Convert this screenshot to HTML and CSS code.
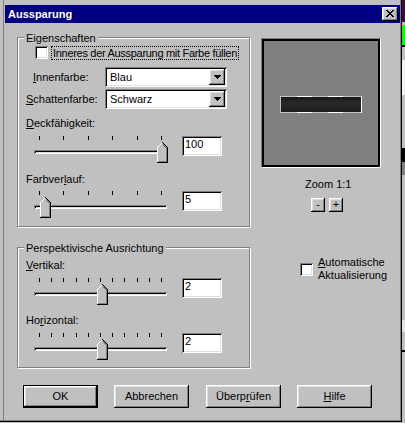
FILE: index.html
```html
<!DOCTYPE html>
<html lang="de">
<head>
  <meta charset="UTF-8">
  <title>Aussparung</title>
  <link rel="stylesheet" href="styles.css">
</head>
<body>
  <div class="screen">
    <div class="dialog">
      <div class="titlebar">
        <span class="title">Aussparung</span>
        <div class="close raised">
          <svg width="8" height="7" viewBox="0 0 8 7" shape-rendering="crispEdges"><path d="M0 0h2v1H0zM6 0h2v1H6zM1 1h2v1H1zM5 1h2v1H5zM2 2h4v1H2zM3 3h2v1H3zM2 4h4v1H2zM1 5h2v1H1zM5 5h2v1H5zM0 6h2v1H0zM6 6h2v1H6z" fill="#000"/></svg>
        </div>
      </div>

      <div class="body">
        <div class="left">
          <div class="group g1">
            <div class="legend">Eigenschaften</div>
            <div class="check-row">
              <span class="checkbox sunken"></span>
              <span class="focus">Inneres der Aussparung mit Farbe füllen</span>
            </div>
            <div class="field-row r1">
              <span class="field-label indent"><u>I</u>nnenfarbe:</span>
              <div class="combo sunken">
                <span class="combo-text">Blau</span>
                <span class="combo-btn raised"><svg width="7" height="4" viewBox="0 0 7 4" shape-rendering="crispEdges"><path d="M0 0h7v1H0zM1 1h5v1H1zM2 2h3v1H2zM3 3h1v1H3z" fill="#000"/></svg></span>
              </div>
            </div>
            <div class="field-row r2">
              <span class="field-label"><u>S</u>chattenfarbe:</span>
              <div class="combo sunken">
                <span class="combo-text">Schwarz</span>
                <span class="combo-btn raised"><svg width="7" height="4" viewBox="0 0 7 4" shape-rendering="crispEdges"><path d="M0 0h7v1H0zM1 1h5v1H1zM2 2h3v1H2zM3 3h1v1H3z" fill="#000"/></svg></span>
              </div>
            </div>

            <div class="slabel s1"><u>D</u>eckfähigkeit:</div>
            <div class="srow s1-row">
              <div class="slider">
                <div class="ticks"><i></i><i></i><i></i><i></i><i></i><i></i></div>
                <div class="track"></div>
                <svg class="thumb" style="left: 123px" width="11" height="21" viewBox="0 0 11 21" shape-rendering="crispEdges">
                  <polygon points="0,5 5,0 6,0 11,5 11,21 0,21" fill="#c0c0c0"/>
                  <path d="M0.5 20V5.5L5.5 0.5" stroke="#fff" fill="none"/>
                  <path d="M5.5 0.5L10.5 5.5V20.5H0" stroke="#000" fill="none"/>
                  <path d="M6 2.5L9.5 6V19.5H1" stroke="#808080" fill="none"/>
                </svg>
              </div>
              <div class="edit sunken">100</div>
            </div>

            <div class="slabel s2">Farbver<u>l</u>auf:</div>
            <div class="srow s2-row">
              <div class="slider">
                <div class="ticks"><i></i><i></i><i></i><i></i><i></i><i></i></div>
                <div class="track"></div>
                <svg class="thumb" style="left: 6px" width="11" height="21" viewBox="0 0 11 21" shape-rendering="crispEdges">
                  <polygon points="0,5 5,0 6,0 11,5 11,21 0,21" fill="#c0c0c0"/>
                  <path d="M0.5 20V5.5L5.5 0.5" stroke="#fff" fill="none"/>
                  <path d="M5.5 0.5L10.5 5.5V20.5H0" stroke="#000" fill="none"/>
                  <path d="M6 2.5L9.5 6V19.5H1" stroke="#808080" fill="none"/>
                </svg>
              </div>
              <div class="edit sunken">5</div>
            </div>
          </div>

          <div class="group g2">
            <div class="legend">Perspektivische Ausrichtung</div>

            <div class="slabel v1"><u>V</u>ertikal:</div>
            <div class="srow v1-row">
              <div class="slider">
                <div class="ticks"><i></i><i></i><i></i><i></i><i></i><i></i><i></i><i></i><i></i><i></i><i></i></div>
                <div class="track"></div>
                <svg class="thumb" style="left: 63px" width="11" height="21" viewBox="0 0 11 21" shape-rendering="crispEdges">
                  <polygon points="0,5 5,0 6,0 11,5 11,21 0,21" fill="#c0c0c0"/>
                  <path d="M0.5 20V5.5L5.5 0.5" stroke="#fff" fill="none"/>
                  <path d="M5.5 0.5L10.5 5.5V20.5H0" stroke="#000" fill="none"/>
                  <path d="M6 2.5L9.5 6V19.5H1" stroke="#808080" fill="none"/>
                </svg>
              </div>
              <div class="edit sunken">2</div>
            </div>

            <div class="slabel v2">Ho<u>r</u>izontal:</div>
            <div class="srow v2-row">
              <div class="slider">
                <div class="ticks"><i></i><i></i><i></i><i></i><i></i><i></i><i></i><i></i><i></i><i></i><i></i></div>
                <div class="track"></div>
                <svg class="thumb" style="left: 63px" width="11" height="21" viewBox="0 0 11 21" shape-rendering="crispEdges">
                  <polygon points="0,5 5,0 6,0 11,5 11,21 0,21" fill="#c0c0c0"/>
                  <path d="M0.5 20V5.5L5.5 0.5" stroke="#fff" fill="none"/>
                  <path d="M5.5 0.5L10.5 5.5V20.5H0" stroke="#000" fill="none"/>
                  <path d="M6 2.5L9.5 6V19.5H1" stroke="#808080" fill="none"/>
                </svg>
              </div>
              <div class="edit sunken">2</div>
            </div>
          </div>
        </div>

        <div class="right">
          <div class="preview">
            <div class="bar"></div>
          </div>
          <div class="zoom-label">Zoom 1:1</div>
          <div class="zoom-buttons">
            <div class="small-btn raised">-</div>
            <div class="small-btn raised">+</div>
          </div>
          <div class="auto">
            <span class="checkbox sunken"></span>
            <span class="auto-label"><u>A</u>utomatische<br>Aktualisierung</span>
          </div>
        </div>
      </div>

      <div class="buttons">
        <div class="btn raised default">OK</div>
        <div class="btn raised">Abbrechen</div>
        <div class="btn raised check-btn">Überp<u>r</u>üfen</div>
        <div class="btn raised"><u>H</u>ilfe</div>
      </div>
    </div>

    <div class="behind">
      <i class="b-purple"></i>
      <i class="b-gray" style="height: 3px"></i>
      <i class="b-green"></i>
      <i class="b-black" style="height: 2px"></i>
      <i class="b-gray" style="height: 13px"></i>
      <i class="b-white"></i>
      <i class="b-gray" style="height: 53px"></i>
      <i class="b-black" style="height: 14px"></i>
      <i class="b-dark"></i>
      <i class="b-gray" style="height: 145px"></i>
      <i class="b-light"></i>
      <i class="b-gray" style="height: 18px"></i>
      <i class="b-black" style="height: 2px"></i>
    </div>
  </div>
</body>
</html>
```

FILE: styles.css
```css
* {
  margin: 0;
  padding: 0;
  box-sizing: border-box;
}

body {
  width: 405px;
  height: 423px;
  overflow: hidden;
  background: #c0c0c0;
  color: #000;
  font-family: "Liberation Sans", Arial, sans-serif;
  font-size: 11px;
  line-height: 13px;
}

u {
  text-underline-offset: 1px;
}

.screen {
  display: flex;
  height: 423px;
}

/* win95 bevels */
.raised {
  background: #c0c0c0;
  box-shadow: inset -1px -1px #000, inset 1px 1px #fff, inset -2px -2px #808080, inset 2px 2px #dfdfdf;
}

.sunken {
  background: #fff;
  box-shadow: inset 1px 1px #808080, inset -1px -1px #fff, inset 2px 2px #000, inset -2px -2px #dfdfdf;
}

.dialog {
  width: 402px;
  height: 422px;
  flex: none;
  box-shadow: inset -1px -1px #000, inset -2px -2px #808080, inset 3px 0 #c0c0c0, inset 4px 0 #808080;
}

.titlebar {
  margin: 5px 0 0 5px;
  width: 395px;
  height: 18px;
  background: #000080;
  color: #fff;
  display: flex;
  align-items: flex-start;
  justify-content: space-between;
  padding: 0 2px 0 3px;
}

.title {
  font-weight: bold;
  line-height: 18px;
}

.close {
  width: 16px;
  height: 14px;
  margin-top: 2px;
}

.close svg {
  display: block;
  margin: 3px 0 0 4px;
}

.body {
  display: flex;
  padding: 14px 0 0 17px;
}

.left {
  width: 233px;
  flex: none;
}

.group {
  border: 1px solid #808080;
  box-shadow: inset 1px 1px #fff, 1px 1px #fff;
}

.g1 {
  height: 190px;
}

.g2 {
  height: 121px;
  margin-top: 20px;
}

.legend {
  width: fit-content;
  margin: -6px 0 0 6px;
  padding: 0 2px;
  background: #c0c0c0;
}

.check-row {
  display: flex;
  align-items: flex-start;
  margin: 1px 0 0 17px;
}

.checkbox {
  width: 13px;
  height: 13px;
  flex: none;
}

.focus {
  margin-left: 3px;
  padding: 0 1px;
  border: 1px dotted #000;
  line-height: 12px;
  white-space: nowrap;
  letter-spacing: -0.3px;
}

.field-row {
  display: flex;
  align-items: center;
  height: 20px;
  margin-left: 8px;
}

.r1 {
  margin-top: 7px;
}

.r2 {
  margin-top: 2px;
}

.field-label {
  width: 79px;
}

.indent {
  padding-left: 7px;
}

.combo {
  width: 122px;
  height: 20px;
  display: flex;
  justify-content: space-between;
  padding: 2px;
}

.combo-text {
  padding-left: 3px;
  line-height: 16px;
}

.combo-btn {
  width: 16px;
  height: 16px;
  display: flex;
  align-items: center;
  justify-content: center;
}

.combo-btn svg {
  display: block;
}

.slabel {
  margin-left: 8px;
}

.s1 {
  margin-top: 8px;
}

.s2 {
  margin-top: 11px;
}

.v1 {
  margin-top: 4px;
}

.v2 {
  margin-top: 10px;
}

.srow {
  display: flex;
  margin: 6px 0 0 16px;
}

.s2-row {
  margin-top: 5px;
}

.slider {
  position: relative;
  width: 133px;
  height: 26px;
}

.ticks {
  display: flex;
  justify-content: space-between;
  height: 4px;
  padding: 0 5px;
}

.ticks i {
  width: 1px;
  background: #000;
}

.track {
  position: absolute;
  left: 0;
  right: 0;
  top: 14px;
  height: 4px;
  background: #c0c0c0;
  box-shadow: inset 1px 1px #808080, inset -1px -1px #fff, inset 2px 2px #000, inset -2px -2px #dfdfdf;
}

.thumb {
  position: absolute;
  top: 6px;
  display: block;
}

.edit {
  width: 40px;
  height: 20px;
  margin-left: 15px;
  padding: 2px 0 0 3px;
  line-height: 12px;
}

.right {
  width: 151px;
  padding: 1px 0 0 11px;
}

.preview {
  width: 120px;
  height: 130px;
  border: 1px solid;
  border-color: #808080 #fff #fff #808080;
  background: #808080;
  box-shadow: inset 0 0 0 2px #000;
  padding: 57px 0 0 18px;
}

.bar {
  width: 82px;
  height: 17px;
  border-left: 1px solid #c0c0c0;
  border-right: 1px solid #fff;
  background:
    linear-gradient(to right, #c4c4c4 0 16px, #fff 16px 31px, #c4c4c4 31px 47px, #fff 47px 62px, #c4c4c4 62px) top / 100% 1px no-repeat,
    linear-gradient(to right, #c4c4c4 0 16px, #fff 16px 31px, #c4c4c4 31px 47px, #fff 47px 62px, #c4c4c4 62px) bottom / 100% 1px no-repeat,
    linear-gradient(#141414, #2a2a2a 40%, #1c1c1c);
}

.zoom-label {
  margin-top: 10px;
  padding-left: 44px;
}

.zoom-buttons {
  display: flex;
  gap: 4px;
  margin: 7px 0 0 50px;
}

.small-btn {
  width: 14px;
  height: 14px;
  text-align: center;
  line-height: 13px;
}

.auto {
  display: flex;
  align-items: center;
  margin: 44px 0 0 39px;
}

.auto-label {
  margin-left: 5px;
}

.buttons {
  display: flex;
  gap: 16px;
  margin: 17px 0 0 23px;
}

.btn {
  width: 75px;
  height: 23px;
  display: flex;
  align-items: center;
  justify-content: center;
}

.default {
  border: 1px solid #000;
}

.check-btn {
  margin-left: 1px;
}

/* the window behind the dialog */
.behind {
  width: 3px;
  flex: none;
  display: flex;
  flex-direction: column;
  background: #c0c0c0;
}

.behind i {
  display: block;
  flex: none;
}

.b-purple { height: 22px; background: #3c0c3c; }
.b-green { height: 20px; background: #00ff00; }
.b-black { background: #000; }
.b-gray { background: #c0c0c0; }
.b-white { height: 35px; background: #f4f4f4; }
.b-dark { height: 13px; background: #808080; }
.b-light { height: 12px; background: #e4e4e4; }
```
